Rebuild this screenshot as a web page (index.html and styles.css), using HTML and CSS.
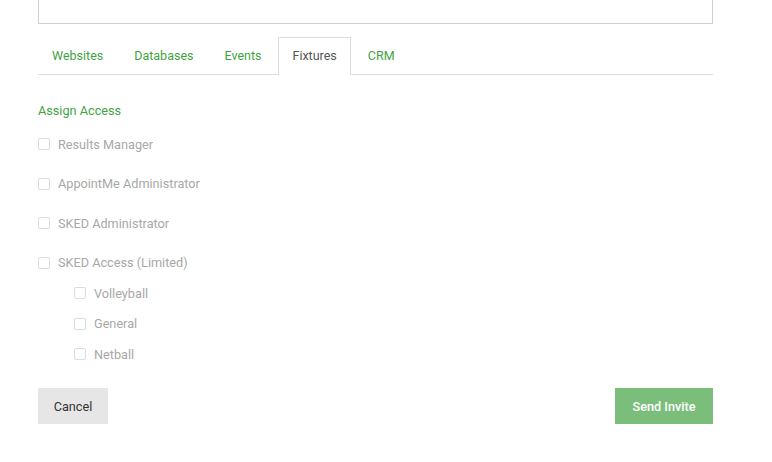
FILE: index.html
```html
<!DOCTYPE html>
<html>
<head>
<meta charset="utf-8">
<link rel="stylesheet" href="styles.css">
</head>
<body>
<div class="page">
  <div class="topbox"></div>
  <ul class="tabs">
    <li class="tab">Websites</li>
    <li class="tab">Databases</li>
    <li class="tab">Events</li>
    <li class="tab active">Fixtures</li>
    <li class="tab">CRM</li>
  </ul>
  <div class="section">
    <div class="title">Assign Access</div>
    <div class="list">
      <label class="row"><span class="box"></span>Results Manager</label>
      <label class="row"><span class="box"></span>AppointMe Administrator</label>
      <label class="row"><span class="box"></span>SKED Administrator</label>
      <label class="row"><span class="box"></span>SKED Access (Limited)</label>
    </div>
    <div class="sublist">
      <label class="row"><span class="box"></span>Volleyball</label>
      <label class="row"><span class="box"></span>General</label>
      <label class="row"><span class="box"></span>Netball</label>
    </div>
  </div>
  <div class="actions">
    <button class="btn cancel">Cancel</button>
    <button class="btn send">Send Invite</button>
  </div>
</div>
</body>
</html>
```
FILE: styles.css
```css
html, body {
  margin: 0;
  padding: 0;
  background: #fff;
}
body {
  font-family: Roboto, "Liberation Sans", Arial, sans-serif;
  font-size: 12.7px;
  color: #555;
}
.page {
  width: 675px;
  margin-left: 38px;
}
.topbox {
  height: 23px;
  border: 1px solid #cfcfcf;
  border-top: 0;
}
.tabs {
  list-style: none;
  margin: 13px 0 0;
  padding: 0;
  display: flex;
  height: 37px;
  border-bottom: 1px solid #dddddd;
}
.tab {
  height: 36px;
  line-height: 36px;
  padding: 0 13px;
  margin-right: 3px;
  border: 1px solid transparent;
  border-bottom: 0;
  color: #3fa33f;
  background: #fff;
  font-size: 12.5px;
}
.tab.active {
  border-color: #dddddd;
  color: #555;
  height: 37px;
}
.section {
  padding-top: 27px;
}
.title {
  line-height: 18px;
  color: #3fa33f;
}
.list {
  margin-top: 14px;
  display: flex;
  flex-direction: column;
  gap: 19.5px;
}
.sublist {
  margin-top: 10.5px;
  padding-left: 36px;
  display: flex;
  flex-direction: column;
  gap: 10.5px;
}
.row {
  display: flex;
  align-items: center;
  height: 20px;
  color: #a8a8a8;
}
.box {
  width: 10px;
  height: 10px;
  border: 1px solid #dcdcdc;
  border-radius: 2px;
  margin-right: 8px;
  background: #fff;
}
.actions {
  margin-top: 24px;
  display: flex;
  justify-content: space-between;
}
.btn {
  font-family: Roboto, "Liberation Sans", Arial, sans-serif;
  font-size: 12.7px;
  border: 0;
  height: 36px;
  padding: 0;
}
.cancel {
  width: 70px;
  background: #e6e6e6;
  color: #333;
}
.send {
  width: 98px;
  background: #7bbd7b;
  color: #fff;
  font-weight: 500;
}
```
